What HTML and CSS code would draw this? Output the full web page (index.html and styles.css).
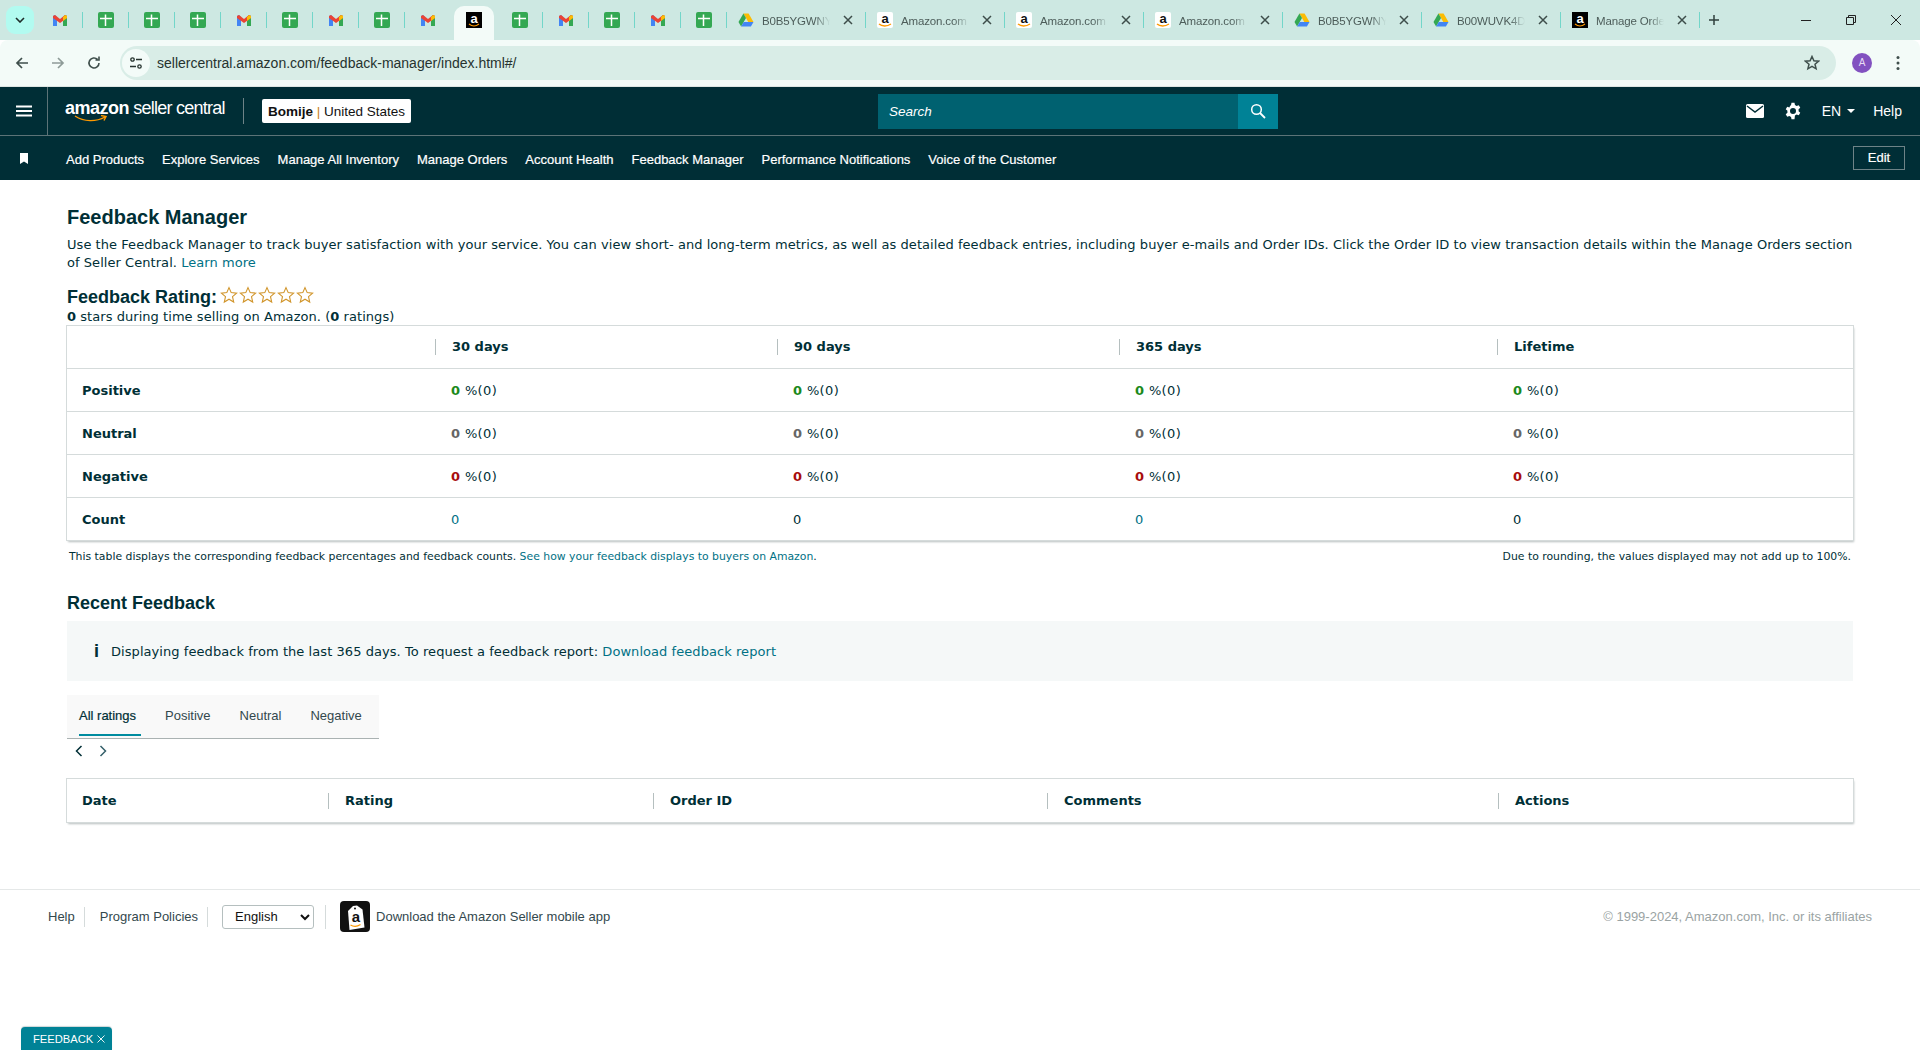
FILE: index.html
```html
<!DOCTYPE html>
<html>
<head>
<meta charset="utf-8">
<title>Feedback Manager</title>
<link rel="stylesheet" href="styles.css">
</head>
<body>
<svg class="defs" width="0" height="0">
	<symbol id="gm" viewBox="0 0 16 16">
		<path d="M1 14V4l2 -1 2 2v9z" fill="#4285f4"/>
		<path d="M11 14V5l2 -2 2 1v10z" fill="#34a853"/>
		<path d="M1 4l2 -1 5 4 5 -4 2 1v2l-7 5 -7 -5z" fill="#ea4335"/>
		<path d="M13 3l2 1v2l-4 3V5z" fill="#fbbc04"/>
	</symbol>
	<symbol id="sh" viewBox="0 0 16 16">
		<rect width="16" height="16" rx="2" fill="#34a853"/>
		<path d="M2 6.500h12M7.500 2.500V14" stroke="#fff" stroke-width="1.500"/>
	</symbol>
	<symbol id="amb" viewBox="0 0 16 16">
		<rect width="16" height="16" fill="#000"/>
		<text x="8" y="10.500" font-family="Liberation Sans" font-weight="700" font-size="13" fill="#fff" text-anchor="middle">a</text>
		<path d="M3 12c3 2.400 7 2.400 10 0" stroke="#f90" stroke-width="1.200" fill="none"/>
	</symbol>
	<symbol id="amw" viewBox="0 0 16 16">
		<rect width="16" height="16" rx="2" fill="#fff"/>
		<text x="8" y="10.500" font-family="Liberation Sans" font-weight="700" font-size="13" fill="#111" text-anchor="middle">a</text>
		<path d="M2 12c3 2.600 8 2.600 12 0" stroke="#f90" stroke-width="1.400" fill="none"/>
	</symbol>
	<symbol id="dr" viewBox="0 0 16 16">
		<path d="M5.400 1.500h5.200L15.500 10h-5.200z" fill="#fbbc04"/>
		<path d="M5.400 1.500L.5 10l2.600 4.500L8 6z" fill="#34a853"/>
		<path d="M5.700 10h9.800l-2.600 4.500H3.100z" fill="#4285f4"/>
	</symbol>
	<symbol id="star" viewBox="0 0 18 18">
		<path d="M9 1.600l2.200 5 5.400.5-4.100 3.600 1.200 5.300L9 13.200l-4.700 2.800 1.200-5.300L1.400 7.100l5.400-.5z" fill="#fff" stroke="#d1952b" stroke-width="1.100"/>
	</symbol>
	<symbol id="close" viewBox="0 0 10 10">
		<path d="M1 1l8 8M9 1L1 9" stroke="#3d4d4a" stroke-width="1.500"/>
	</symbol>
</svg>

<div class="tabstrip">
	<button class="tablist"><svg width="10" height="6" viewBox="0 0 10 6"><path d="M1 1l4 4 4 -4" fill="none" stroke="#1f2d2a" stroke-width="1.600"/></svg></button>
	<div class="pin sep"><svg class="fav"><use href="#gm"/></svg></div>
	<div class="pin sep"><svg class="fav"><use href="#sh"/></svg></div>
	<div class="pin sep"><svg class="fav"><use href="#sh"/></svg></div>
	<div class="pin sep"><svg class="fav"><use href="#sh"/></svg></div>
	<div class="pin sep"><svg class="fav"><use href="#gm"/></svg></div>
	<div class="pin sep"><svg class="fav"><use href="#sh"/></svg></div>
	<div class="pin sep"><svg class="fav"><use href="#gm"/></svg></div>
	<div class="pin sep"><svg class="fav"><use href="#sh"/></svg></div>
	<div class="pin"><svg class="fav"><use href="#gm"/></svg></div>
	<div class="pin active"><svg class="fav"><use href="#amb"/></svg></div>
	<div class="pin sep"><svg class="fav"><use href="#sh"/></svg></div>
	<div class="pin sep"><svg class="fav"><use href="#gm"/></svg></div>
	<div class="pin sep"><svg class="fav"><use href="#sh"/></svg></div>
	<div class="pin sep"><svg class="fav"><use href="#gm"/></svg></div>
	<div class="pin sep"><svg class="fav"><use href="#sh"/></svg></div>
	<div class="tab sep"><svg class="fav"><use href="#dr"/></svg><span class="ttl">B0B5YGWNY</span><svg class="x"><use href="#close"/></svg></div>
	<div class="tab sep"><svg class="fav"><use href="#amw"/></svg><span class="ttl">Amazon.com</span><svg class="x"><use href="#close"/></svg></div>
	<div class="tab sep"><svg class="fav"><use href="#amw"/></svg><span class="ttl">Amazon.com</span><svg class="x"><use href="#close"/></svg></div>
	<div class="tab sep"><svg class="fav"><use href="#amw"/></svg><span class="ttl">Amazon.com</span><svg class="x"><use href="#close"/></svg></div>
	<div class="tab sep"><svg class="fav"><use href="#dr"/></svg><span class="ttl">B0B5YGWNY</span><svg class="x"><use href="#close"/></svg></div>
	<div class="tab sep"><svg class="fav"><use href="#dr"/></svg><span class="ttl">B00WUVK4D</span><svg class="x"><use href="#close"/></svg></div>
	<div class="tab sep"><svg class="fav"><use href="#amb"/></svg><span class="ttl">Manage Orders</span><svg class="x"><use href="#close"/></svg></div>
	<svg class="newtab" width="12" height="12" viewBox="0 0 12 12"><path d="M6 1v10M1 6h10" stroke="#2f3f3c" stroke-width="1.500"/></svg>
	<div class="winbtns">
		<svg width="12" height="12" viewBox="0 0 12 12"><path d="M1 6.500h10" stroke="#222" stroke-width="1"/></svg>
		<svg width="12" height="12" viewBox="0 0 12 12"><path d="M1.500 3.500h7v7h-7zM3.500 3.500v-2h7v7h-2" fill="none" stroke="#222" stroke-width="1"/></svg>
		<svg width="12" height="12" viewBox="0 0 12 12"><path d="M1 1l10 10M11 1L1 11" stroke="#222" stroke-width="1"/></svg>
	</div>
</div>

<div class="toolbar">
	<svg class="tbicon" width="16" height="16" viewBox="0 0 16 16"><path d="M14 8H3M8 3L3 8l5 5" fill="none" stroke="#3f4f4c" stroke-width="1.700"/></svg>
	<svg class="tbicon" width="16" height="16" viewBox="0 0 16 16"><path d="M2 8h11M8 3l5 5 -5 5" fill="none" stroke="#8e9b98" stroke-width="1.700"/></svg>
	<svg class="tbicon" width="16" height="16" viewBox="0 0 16 16"><path d="M13 8a5 5 0 1 1 -1.500 -3.600M13 1.500v3.500H9.500" fill="none" stroke="#3f4f4c" stroke-width="1.600"/></svg>
	<div class="omnibox">
		<span class="siteinfo"><svg width="14" height="14" viewBox="0 0 14 14"><g fill="none" stroke="#26332f" stroke-width="1.300"><circle cx="3.500" cy="3.500" r="1.700"/><path d="M7 3.500h6M1 10.500h6"/><circle cx="10.500" cy="10.500" r="1.700"/></g></svg></span>
		<span class="url">sellercentral.amazon.com/feedback-manager/index.html#/</span>
		<svg class="bm" width="16" height="16" viewBox="0 0 16 16"><path d="M8 1.500l1.900 4.300 4.600.4-3.500 3 1.100 4.600L8 11.400l-4.100 2.400L5 9.200l-3.500-3 4.600-.4z" fill="none" stroke="#3f4f4c" stroke-width="1.500"/></svg>
	</div>
	<span class="avatar">A</span>
	<svg class="kebab" width="4" height="16" viewBox="0 0 4 16"><circle cx="2" cy="2.500" r="1.500" fill="#3f4f4c"/><circle cx="2" cy="8" r="1.500" fill="#3f4f4c"/><circle cx="2" cy="13.500" r="1.500" fill="#3f4f4c"/></svg>
</div>

<header class="hdr">
	<div class="burger"><svg width="16" height="12" viewBox="0 0 16 12"><path d="M0 1.500h16M0 6h16M0 10.500h16" stroke="#fff" stroke-width="2"/></svg></div>
	<div class="logo">
		<span class="logotext"><b>amazon</b> seller central</span>
		<svg class="smile" width="34" height="7" viewBox="0 0 34 7"><path d="M1 1c9 6 21 6 30 1M27 .5l5 1 -2 4" fill="none" stroke="#f90" stroke-width="1.400"/></svg>
	</div>
	<span class="logosep"></span>
	<div class="acct"><b>Bomije</b> <i>|</i> United States</div>
	<div class="search">
		<span class="searchtxt">Search</span>
		<span class="searchbtn"><svg width="16" height="16" viewBox="0 0 16 16"><circle cx="6.500" cy="6.500" r="4.800" fill="none" stroke="#fff" stroke-width="1.500"/><path d="M10 10l5 5" stroke="#fff" stroke-width="1.800"/></svg></span>
	</div>
	<div class="hdright">
		<svg width="18" height="14" viewBox="0 0 18 14"><rect width="18" height="14" rx="1.500" fill="#fff"/><path d="M1 2l8 6 8 -6" fill="none" stroke="#002e36" stroke-width="1.500"/></svg>
		<svg class="gear" width="18" height="18" viewBox="0 0 24 24"><path fill="#fff" fill-rule="evenodd" d="M10 1h4l.6 3a8 8 0 0 1 2.200 1.300l2.900-1 2 3.500-2.300 2a8 8 0 0 1 0 2.500l2.300 2-2 3.500-2.900-1a8 8 0 0 1-2.200 1.300L14 23h-4l-.6-3a8 8 0 0 1-2.200-1.300l-2.900 1-2-3.500 2.300-2a8 8 0 0 1 0-2.500l-2.300-2 2-3.500 2.900 1A8 8 0 0 1 9.400 4zM12 8a4 4 0 1 0 0 8 4 4 0 0 0 0-8z"/></svg>
		<span class="lang">EN <span class="caret"></span></span>
		<span class="hhelp">Help</span>
	</div>
</header>

<nav class="navbar">
	<svg class="navbm" width="8" height="11" viewBox="0 0 8 11"><path d="M0 0h8v11L4 8.500 0 11z" fill="#fff"/></svg>
	<a>Add Products</a>
	<a>Explore Services</a>
	<a>Manage All Inventory</a>
	<a>Manage Orders</a>
	<a>Account Health</a>
	<a>Feedback Manager</a>
	<a>Performance Notifications</a>
	<a>Voice of the Customer</a>
	<button class="edit">Edit</button>
</nav>

<main class="page">
	<h1>Feedback Manager</h1>
	<p class="intro">Use the Feedback Manager to track buyer satisfaction with your service. You can view short- and long-term metrics, as well as detailed feedback entries, including buyer e-mails and Order IDs. Click the Order ID to view transaction details within the Manage Orders section of Seller Central. <a class="lnk">Learn more</a></p>
	<div class="rating">
		<h2>Feedback Rating:</h2>
		<span class="stars">
			<svg><use href="#star"/></svg><svg><use href="#star"/></svg><svg><use href="#star"/></svg><svg><use href="#star"/></svg><svg><use href="#star"/></svg>
		</span>
	</div>
	<p class="sub"><b>0</b> stars during time selling on Amazon. (<b>0</b> ratings)</p>

	<table class="tbl metrics">
		<tr><th></th><th><span>30 days</span></th><th><span>90 days</span></th><th><span>365 days</span></th><th><span>Lifetime</span></th></tr>
		<tr><td class="rowh">Positive</td><td><b class="pos">0</b> %(0)</td><td><b class="pos">0</b> %(0)</td><td><b class="pos">0</b> %(0)</td><td><b class="pos">0</b> %(0)</td></tr>
		<tr><td class="rowh">Neutral</td><td><b class="neu">0</b> %(0)</td><td><b class="neu">0</b> %(0)</td><td><b class="neu">0</b> %(0)</td><td><b class="neu">0</b> %(0)</td></tr>
		<tr><td class="rowh">Negative</td><td><b class="neg">0</b> %(0)</td><td><b class="neg">0</b> %(0)</td><td><b class="neg">0</b> %(0)</td><td><b class="neg">0</b> %(0)</td></tr>
		<tr><td class="rowh">Count</td><td class="lnk">0</td><td>0</td><td class="lnk">0</td><td>0</td></tr>
	</table>
	<div class="notes">
		<span>This table displays the corresponding feedback percentages and feedback counts. <a class="lnk">See how your feedback displays to buyers on Amazon</a>.</span>
		<span>Due to rounding, the values displayed may not add up to 100%.</span>
	</div>

	<h2 class="recent">Recent Feedback</h2>
	<div class="info">
		<span class="infoi">i</span>
		<span>Displaying feedback from the last 365 days. To request a feedback report: <a class="lnk">Download feedback report</a></span>
	</div>

	<div class="tabs">
		<a class="cur">All ratings</a>
		<a>Positive</a>
		<a>Neutral</a>
		<a>Negative</a>
	</div>
	<div class="pager">
		<svg width="8" height="12" viewBox="0 0 8 12"><path d="M6.500 1L1.500 6l5 5" fill="none" stroke="#002f36" stroke-width="1.500"/></svg>
		<svg width="8" height="12" viewBox="0 0 8 12"><path d="M1.500 1l5 5 -5 5" fill="none" stroke="#35606a" stroke-width="1.500"/></svg>
	</div>

	<table class="tbl entries">
		<tr><th>Date</th><th><span>Rating</span></th><th><span>Order ID</span></th><th><span>Comments</span></th><th><span>Actions</span></th></tr>
	</table>
</main>

<footer class="foot">
	<a class="fl">Help</a>
	<a class="fl">Program Policies</a>
	<select class="langsel"><option>English</option></select>
	<span class="fsep"></span>
	<span class="appicon"><svg width="30" height="31" viewBox="0 0 30 31"><rect width="30" height="31" rx="4" fill="#111"/><path d="M8 10l5 -5 4 -.5 5.500 4 2 18 -15 2.500z" fill="#fff"/><circle cx="15" cy="7.500" r="1" fill="#111"/><text x="16" y="21" font-family="Liberation Sans" font-weight="700" font-size="15" fill="#111" text-anchor="middle">a</text><path d="M10.500 24c3 1.800 7 1.500 10 -.5" stroke="#f90" stroke-width="1.200" fill="none"/></svg></span>
	<span class="appl">Download the Amazon Seller mobile app</span>
	<span class="copy">&copy; 1999-2024, Amazon.com, Inc. or its affiliates</span>
</footer>

<div class="fbbtn">FEEDBACK <svg width="8" height="8" viewBox="0 0 8 8"><path d="M.5 .5l7 7M7.500 .5l-7 7" stroke="#e6f3f5" stroke-width="1"/></svg></div>
</body>
</html>
```
FILE: styles.css
```css
* {
	box-sizing: border-box;
}
html, body {
	height: 100%;
}
body {
	margin: 0;
	height: 1050px;
	overflow: hidden;
	background: #fff;
	font-family: "DejaVu Sans", sans-serif;
	font-size: 13px;
	color: #002f36;
	position: relative;
}
.defs {
	position: absolute;
}
svg {
	display: block;
	flex: none;
}

/* browser chrome */
.tabstrip {
	display: flex;
	align-items: stretch;
	height: 40px;
	background: #cde8e2;
	padding: 6px 0 0 6px;
	font-family: "Liberation Sans", sans-serif;
}
.tablist {
	width: 28px;
	height: 28px;
	margin-right: 3px;
	padding: 0;
	border: 0;
	border-radius: 9px;
	background: #b2fbf0;
	display: flex;
	align-items: center;
	justify-content: center;
}
.fav {
	width: 16px;
	height: 16px;
}
.pin, .tab {
	position: relative;
	display: flex;
	align-items: center;
	height: 28px;
}
.pin {
	width: 46px;
	justify-content: center;
}
.pin.active {
	background: #f3fbf8;
	height: 34px;
	margin: 0 3px;
	width: 40px;
	border-radius: 10px 10px 0 0;
	padding-bottom: 6px;
}
.sep::after {
	content: "";
	position: absolute;
	right: 0;
	top: 6px;
	height: 16px;
	width: 1px;
	background: #72d6c9;
}
.tab {
	width: 139px;
	padding-left: 11px;
	font-size: 11.500px;
	color: #4d5d5a;
}
.ttl {
	margin-left: 8px;
	width: 68px;
	padding-top: 1px;
	overflow: hidden;
	white-space: nowrap;
	letter-spacing: -.15px;
	-webkit-mask-image: linear-gradient(to right, #000 78%, transparent);
	mask-image: linear-gradient(to right, #000 78%, transparent);
}
.x {
	margin-left: 13px;
	width: 10px;
	height: 10px;
}
.newtab {
	margin: 8px 0 0 8px;
}
.winbtns {
	margin-left: auto;
	display: flex;
	gap: 33px;
	padding: 8px 18px 0 0;
}
.toolbar {
	display: flex;
	align-items: center;
	height: 47px;
	background: #f3fbf8;
	border-radius: 8px 8px 0 0;
	border-bottom: 1px solid #dde5e2;
	padding: 0 20px 1px 14px;
}
.tbicon {
	margin-right: 20px;
}
.omnibox {
	flex: 1;
	display: flex;
	align-items: center;
	height: 34px;
	margin-left: -2px;
	padding: 0 16px 0 2px;
	border-radius: 17px;
	background: #d9ede7;
	font-family: "Liberation Sans", sans-serif;
	font-size: 14px;
	color: #26332f;
}
.siteinfo {
	width: 28px;
	height: 28px;
	border-radius: 50%;
	background: #f3fbf8;
	display: flex;
	align-items: center;
	justify-content: center;
	margin-right: 7px;
}
.bm {
	margin-left: auto;
}
.avatar {
	width: 20px;
	height: 20px;
	margin: 0 0 0 16px;
	border-radius: 50%;
	background: #8251c0;
	color: #e8dcf5;
	font: 10px/20px "Liberation Sans", sans-serif;
	text-align: center;
}
.kebab {
	margin-left: 24px;
}

/* seller central header */
.hdr {
	display: flex;
	align-items: center;
	height: 49px;
	background: #002e36;
	border-bottom: 1px solid #5c7377;
	font-family: "Liberation Sans", sans-serif;
	color: #fff;
}
.burger {
	width: 48px;
	height: 100%;
	border-right: 1px solid #5c7377;
	padding-left: 16px;
	display: flex;
	align-items: center;
}
.logo {
	margin-left: 17px;
	width: 178px;
	display: flex;
	flex-direction: column;
	margin-top: -1px;
}
.logotext {
	font-size: 18px;
	letter-spacing: -.75px;
	line-height: 18px;
	white-space: nowrap;
}
.logotext b {
	letter-spacing: -.5px;
}
.smile {
	margin: -2px 0 0 9px;
}
.logosep {
	width: 1px;
	height: 26px;
	background: #6e8387;
}
.acct {
	margin-left: 18px;
	width: 149px;
	height: 24px;
	background: #fff;
	border-radius: 2px;
	color: #111;
	font-size: 13.500px;
	line-height: 25px;
	text-align: center;
	white-space: nowrap;
}
.acct i {
	font-style: normal;
	color: #c77f16;
}
.search {
	margin-left: 467px;
	width: 400px;
	height: 35px;
	background: #006170;
	display: flex;
	align-items: center;
	font-size: 13.500px;
	font-style: italic;
}
.searchtxt {
	flex: 1;
	padding-left: 11px;
}
.searchbtn {
	width: 40px;
	height: 100%;
	background: #008296;
	display: flex;
	align-items: center;
	justify-content: center;
}
.hdright {
	margin-left: auto;
	display: flex;
	align-items: center;
	padding-right: 18px;
	font-size: 14px;
}
.gear {
	margin-left: 20px;
}
.lang {
	margin-left: 20px;
	display: flex;
	align-items: center;
	gap: 6px;
}
.caret {
	width: 0;
	height: 0;
	border: 4px solid transparent;
	border-top: 4px solid #fff;
	border-bottom: 0;
}
.hhelp {
	margin-left: 18px;
}
.navbar {
	display: flex;
	align-items: center;
	height: 44px;
	background: #002e36;
	padding: 2px 15px 0 20px;
	font-family: "Liberation Sans", sans-serif;
	font-size: 13px;
	color: #fff;
	gap: 18px;
	-webkit-text-stroke: .2px #fff;
}
.navbm {
	margin-right: 20px;
	margin-top: -2px;
}
.navbar a {
	white-space: nowrap;
}
.edit {
	margin-left: auto;
	width: 52px;
	height: 24px;
	margin-top: -3px;
	padding: 0;
	background: transparent;
	border: 1px solid #6e8387;
	color: #fff;
	font: 13px "Liberation Sans", sans-serif;
}

/* page */
.page {
	padding: 27px 67px 0;
}
h1, h2 {
	margin: 0;
	font-family: "Liberation Sans", sans-serif;
	font-weight: 700;
	color: #002f36;
}
h1 {
	font-size: 20px;
	line-height: 20px;
}
.intro {
	margin: 9px 0 0;
	line-height: 18px;
	letter-spacing: .05px;
}
.lnk {
	color: #007185;
}
.rating {
	display: flex;
	margin-top: 15px;
	height: 18px;
}
.rating h2 {
	font-size: 18px;
	line-height: 20px;
}
.stars {
	display: flex;
	gap: 1px;
	margin: -1px 0 0 3px;
}
.stars svg {
	width: 18px;
	height: 18px;
}
.sub {
	margin: 4px 0 0;
	line-height: 16px;
	letter-spacing: .05px;
}
.tbl {
	width: 100%;
	border-collapse: collapse;
	table-layout: fixed;
	box-shadow: 0 0 0 1px #d5dbdb, 1px 2px 2px #b8bfbf;
	background: #fff;
}
.metrics {
	margin-top: 1px;
}
.tbl th, .tbl td {
	height: 43px;
	padding: 0 0 0 16px;
	text-align: left;
	font-weight: 400;
}
.tbl td {
	padding-top: 2px;
	border-top: 1px solid #d5dbdb;
	letter-spacing: .35px;
}
.tbl .rowh {
	padding-left: 15px;
	letter-spacing: 0;
	font-weight: 700;
}
.tbl th {
	height: 42px;
	padding-left: 15px;
	font-weight: 700;
}
.entries th {
	height: 43px;
}
.tbl th span {
	display: block;
	margin-left: -15px;
	padding-left: 16px;
	border-left: 1px solid #b5bfbf;
	line-height: 16px;
}
.metrics th:nth-child(1) { width: 368px; }
.metrics th:nth-child(2) { width: 342px; }
.metrics th:nth-child(3) { width: 342px; }
.metrics th:nth-child(4) { width: 378px; }
.entries th:nth-child(1) { width: 261px; }
.entries th:nth-child(2) { width: 325px; }
.entries th:nth-child(3) { width: 394px; }
.entries th:nth-child(4) { width: 451px; }
.pos { color: #1b8a1b; }
.neu { color: #666; }
.neg { color: #a80d0d; }
.notes {
	display: flex;
	justify-content: space-between;
	margin-top: 9px;
	padding: 0 2px;
	font-size: 10.850px;
	line-height: 15px;
}
.recent {
	font-size: 18px;
	line-height: 20px;
	margin-top: 29px;
}
.info {
	display: flex;
	align-items: center;
	height: 60px;
	margin-top: 8px;
	padding-left: 27px;
	background: #f5f8f8;
	letter-spacing: .06px;
}
.infoi {
	width: 17px;
	font: 700 18px "Liberation Sans", sans-serif;
}
.tabs {
	display: flex;
	width: 312px;
	height: 44px;
	margin-top: 14px;
	padding-left: 12px;
	background: #f9f9f9;
	border-bottom: 1px solid #aab2b2;
	font-family: "Liberation Sans", sans-serif;
	font-size: 13px;
	line-height: 42px;
	gap: 29px;
	color: #33484d;
}
.tabs .cur {
	width: 62px;
	height: 41px;
	margin-right: -5px;
	border-bottom: 2px solid #008ca0;
	color: #002f36;
	-webkit-text-stroke: .2px #002f36;
}
.pager {
	display: flex;
	gap: 16px;
	padding: 6px 0 0 8px;
	height: 40px;
}
.foot {
	display: flex;
	align-items: center;
	height: 54px;
	margin-top: 67px;
	padding: 0 48px;
	border-top: 1px solid #e5e8e8;
	font-family: "Liberation Sans", sans-serif;
	font-size: 13px;
	color: #33484d;
}
.fl {
	padding-right: 9px;
	margin-right: 15px;
	border-right: 1px solid #d5dbdb;
	line-height: 20px;
}
.langsel {
	width: 92px;
	height: 24px;
	margin-left: -1px;
	padding-left: 8px;
	background: #fff;
	border: 1px solid #b5bfbf;
	border-radius: 3px;
	font: 13px "Liberation Sans", sans-serif;
	color: #111;
}
.fsep {
	width: 1px;
	height: 24px;
	margin: 0 14px 0 11px;
	background: #d5dbdb;
}
.appl {
	margin-left: 6px;
}
.copy {
	margin-left: auto;
	color: #9aa3a3;
}
.fbbtn {
	position: absolute;
	left: 21px;
	bottom: 0;
	width: 91px;
	height: 23px;
	background: #008296;
	border-radius: 4px 4px 0 0;
	box-shadow: 0 -1px 1px #ccd6d8;
	color: #fff;
	font: 11.200px/24px "Liberation Sans", sans-serif;
	padding-left: 12px;
	white-space: nowrap;
	display: flex;
	align-items: center;
	gap: 4px;
}
```
